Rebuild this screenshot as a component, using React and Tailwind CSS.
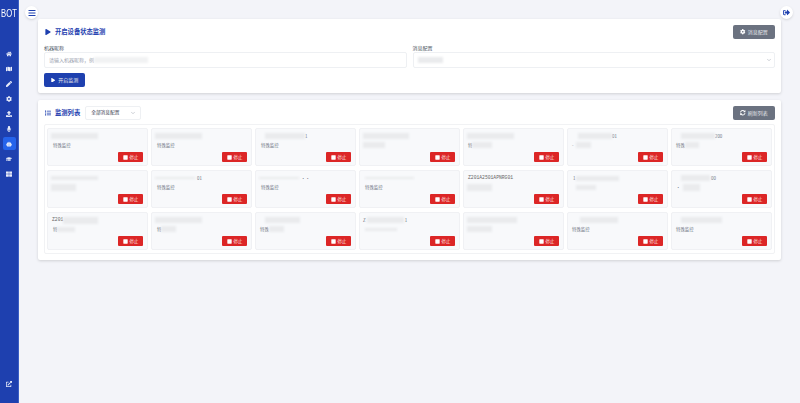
import React from "react";
import { FaHome, FaMap, FaPen, FaCog, FaUpload, FaMicrophone, FaRobot, FaGraduationCap, FaThLarge, FaExternalLinkAlt, FaBars, FaSignOutAlt, FaPlay, FaList, FaStop, FaSyncAlt } from "react-icons/fa";
import { ChevronDown } from "lucide-react";

const cjk = { fontFamily: '"Noto Sans CJK SC","Noto Sans",sans-serif' };

const navItems = [FaHome, FaMap, FaPen, FaCog, FaUpload, FaMicrophone, FaRobot, FaGraduationCap, FaThLarge];

// b = blurred block [width, height, marginLeft], t = text
const S = "特殊监控";
const rows = [
  [
    { a: [["b", 47, 6, 0]], b: [["t", S, 2]] },
    { a: [["b", 47, 6, 0]], b: [["t", S, 2]] },
    { a: [["b", 40, 6, 6], ["t", "1", 0]], b: [["t", S, 2]] },
    { a: [["b", 46, 6, 0]], b: [["b", 22, 6, 0]] },
    { a: [["b", 47, 6, 0]], b: [["t", "特", 1], ["b", 20, 6, 0]] },
    { a: [["b", 34, 6, 7], ["t", "01", 0]], b: [["t", "-", 1], ["b", 15, 6, 2]] },
    { a: [["b", 34, 6, 6], ["t", "200", 0]], b: [["t", "特殊", 1], ["b", 14, 6, 0]] },
  ],
  [
    { a: [["b", 47, 4, 0]], b: [["b", 25, 7, 0]] },
    { a: [["b", 40, 2, 0], ["t", "01", 2]], b: [["t", S, 2]] },
    { a: [["b", 40, 2, 0], ["t", "··", 2]], b: [["t", S, 2]] },
    { a: [["b", 49, 2, 2]], b: [["t", S, 2]] },
    { a: [["m", "Z201A2501APNRG01", 1]], b: [["b", 25, 7, 0]] },
    { a: [["t", "1", 2], ["b", 43, 5, 1]], b: [["b", 20, 5, 5]] },
    { a: [["b", 29, 6, 6], ["t", "00", 1]], b: [["t", "·", 1], ["b", 17, 7, 3]] },
  ],
  [
    { a: [["m", "Z201", 1], ["b", 35, 7, 0]], b: [["t", "特", 2], ["b", 18, 5, 0]] },
    { a: [["b", 47, 6, 0]], b: [["t", "特", 2], ["b", 15, 6, 0]] },
    { a: [["b", 35, 6, 6]], b: [["t", "特殊", 1], ["b", 15, 6, 0]] },
    { a: [["t", "Z", 0], ["b", 37, 6, 1], ["t", "1", 1]], b: [["b", 32, 3, 2]] },
    { a: [["b", 50, 6, 0]], b: [["b", 25, 6, 0]] },
    { a: [["b", 38, 6, 9]], b: [["t", S, 1]] },
    { a: [["b", 41, 6, 6]], b: [["t", S, 1]] },
  ],
];

function Seg({ s }) {
  if (s[0] === "b")
    return <span className="inline-block shrink-0 bg-[#eaebed] blur-[1px]" style={{ width: s[1], height: s[2], marginLeft: s[3] }} />;
  if (s[0] === "m")
    return <span className="shrink-0 text-[4.7px] text-[#666] whitespace-nowrap" style={{ marginLeft: s[2], fontFamily: '"Liberation Mono",monospace' }}>{s[1]}</span>;
  return <span className="shrink-0 text-[4.4px] text-[#6b7280] whitespace-nowrap" style={{ marginLeft: s[2], ...cjk }}>{s[1]}</span>;
}

function Card({ d }) {
  return (
    <div className="h-[38px] rounded-[2px] border border-[#f0f1f4] bg-[#f8f9fb] pl-[3px] pr-[4px] pt-[3px] flex flex-col">
      <div className="h-[8px] flex items-center">{d.a.map((s, i) => <Seg key={i} s={s} />)}</div>
      <div className="h-[8px] mt-[1px] flex items-center">{d.b.map((s, i) => <Seg key={i} s={s} />)}</div>
      <div className="flex-1 flex justify-end items-end pb-[3px]">
        <div className="w-[25px] h-[10px] rounded-[1px] bg-[#dc2626] flex items-center justify-center gap-[2px] text-[#fde8e8] text-[4.4px]" style={cjk}>
          <FaStop className="w-[5px] h-[5px] text-white" />
          <span>停止</span>
        </div>
      </div>
    </div>
  );
}

function GrayBtn({ Icon, label }) {
  return (
    <div className="w-[42px] h-[14px] rounded-[2px] bg-[#6b7280] flex items-center justify-center gap-[2px] text-[#e5e7eb] text-[5px]" style={cjk}>
      <Icon className="w-[5.5px] h-[5.5px] text-white" />
      <span>{label}</span>
    </div>
  );
}

export default function App() {
  return (
    <div className="w-[800px] h-[403px] flex overflow-hidden bg-[#f3f4f9]" style={cjk}>
      <aside className="w-[19px] h-full shrink-0 bg-[#1e40af] border-r border-[#3b5fc4] flex flex-col items-center">
        <div className="h-[27px] w-full flex items-center justify-center text-white text-[11px] scale-x-[0.7]" style={{ fontFamily: '"Liberation Sans",sans-serif' }}>BOT</div>
        <nav className="mt-[20px] flex flex-col items-center gap-[2px]">
          {navItems.map((Icon, i) => (
            <div key={i} className={`w-[13px] h-[13px] rounded-[2px] flex items-center justify-center ${i === 6 ? "bg-[#2563eb]" : ""}`}>
              <Icon className="w-[6px] h-[6px] text-[#e8ecfa]" />
            </div>
          ))}
        </nav>
        <div className="mt-auto mb-[16px]">
          <FaExternalLinkAlt className="w-[6px] h-[6px] text-[#e8ecfa]" />
        </div>
      </aside>

      <main className="flex-1 min-w-0 pl-[19px] pr-[19px]">
        <div className="relative h-[19px]">
          <div className="absolute left-[-13px] top-[6px] w-[13px] h-[13px] rounded-full bg-white shadow-sm flex items-center justify-center">
            <FaBars className="w-[8px] h-[8px] text-[#1e40af]" />
          </div>
          <div className="absolute right-[-12px] top-[6px] w-[13px] h-[13px] rounded-full bg-white shadow-sm flex items-center justify-center">
            <FaSignOutAlt className="w-[7px] h-[7px] text-[#1e40af]" />
          </div>
        </div>

        <section className="h-[74px] rounded-[2px] bg-white shadow-[0_1px_3px_rgba(0,0,0,0.15)] px-[6px] pt-[6px]">
          <div className="h-[14px] flex items-center justify-between">
            <div className="flex items-center pl-[1px] gap-[4px] text-[#1e40af] text-[6.3px] font-bold">
              <FaPlay className="w-[6px] h-[6px]" />
              <span>开启设备状态监测</span>
            </div>
            <GrayBtn Icon={FaCog} label="消息配置" />
          </div>
          <div className="mt-[5px] grid grid-cols-2 gap-[6px]">
            <div>
              <div className="h-[8px] leading-[8px] text-[5px] text-[#4b5563]">机器昵称</div>
              <div className="h-[16px] rounded-[2px] border border-[#eef0f3] flex items-center pl-[4px] text-[5px] text-[#9ca3af] whitespace-nowrap">
                <span>请输入机器昵称，例</span>
                <span className="inline-block w-[54px] h-[6px] bg-[#f1f2f3] blur-[1px]" />
              </div>
            </div>
            <div>
              <div className="h-[8px] leading-[8px] text-[5px] text-[#4b5563]">消息配置</div>
              <div className="h-[16px] rounded-[2px] border border-[#eef0f3] flex items-center justify-between pl-[4px] pr-[2px]">
                <span className="inline-block w-[25px] h-[6px] bg-[#eaebed] blur-[1px]" />
                <ChevronDown className="w-[6px] h-[6px] text-[#9ca3af]" />
              </div>
            </div>
          </div>
          <div className="mt-[5px] w-[41px] h-[14px] rounded-[2px] bg-[#1e40af] flex items-center justify-center gap-[3px] text-[#e5e7eb] text-[5px]">
            <FaPlay className="w-[4.5px] h-[4.5px] text-white" />
            <span>开启监测</span>
          </div>
        </section>

        <section className="mt-[7px] h-[160px] rounded-[2px] bg-white shadow-[0_1px_3px_rgba(0,0,0,0.15)] px-[6px] pt-[6px]">
          <div className="h-[14px] flex items-center justify-between">
            <div className="flex items-center">
              <div className="flex items-center pl-[1px] gap-[4px] text-[#1e40af] text-[6.3px] font-bold">
                <FaList className="w-[6px] h-[6px]" />
                <span>监测列表</span>
              </div>
              <div className="ml-[5px] w-[56px] h-[14px] rounded-[2px] border border-[#eef0f3] flex items-center justify-between pl-[5px] pr-[4px] text-[4.7px] text-[#374151]">
                <span>全部消息配置</span>
                <ChevronDown className="w-[6px] h-[6px] text-[#9ca3af]" />
              </div>
            </div>
            <GrayBtn Icon={FaSyncAlt} label="刷新列表" />
          </div>
          <div className="mt-[4px] h-[130px] rounded-[2px] border border-[#f1f2f4] px-[2px] pt-[3px] grid grid-cols-7 gap-x-[3px] gap-y-[4px] content-start">
            {rows.flat().map((d, i) => <Card key={i} d={d} />)}
          </div>
        </section>
      </main>
    </div>
  );
}
